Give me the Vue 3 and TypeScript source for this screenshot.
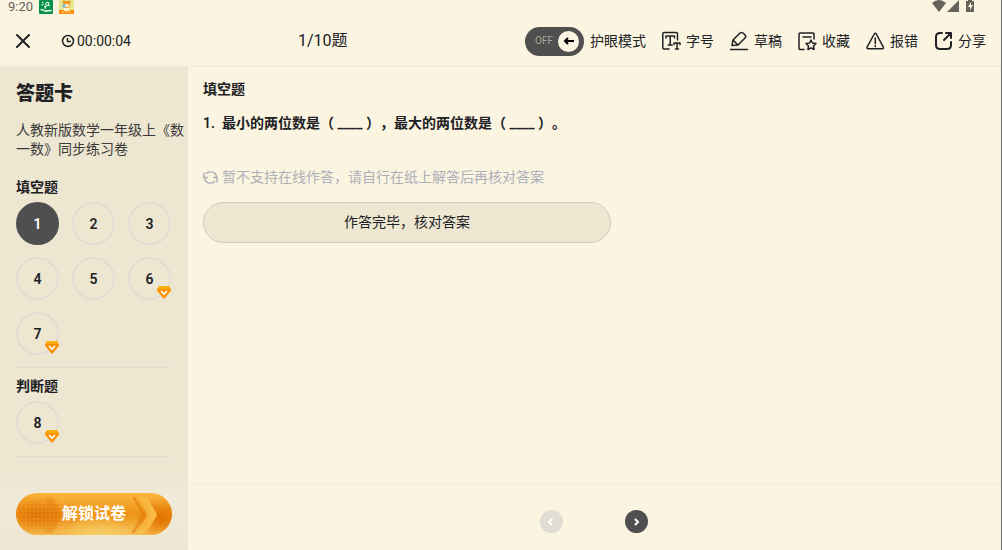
<script setup lang="ts">
import { ref } from 'vue'

interface Question {
  id: number
  vip: boolean
}
interface Section {
  title: string
  questions: Question[]
}

const sections: Section[] = [
  {
    title: '填空题',
    questions: [1, 2, 3, 4, 5, 6, 7].map((id) => ({ id, vip: id > 5 })),
  },
  { title: '判断题', questions: [{ id: 8, vip: true }] },
]
const tools = [
  { name: 'font', label: '字号' },
  { name: 'draft', label: '草稿' },
  { name: 'collect', label: '收藏' },
  { name: 'report', label: '报错' },
  { name: 'share', label: '分享' },
]

const current = ref(1)
const eyeCare = ref(false)
</script>

<template>
  <div class="app">
    <div class="status">
      <span class="clock">9:20</span>
      <svg class="app-icon" viewBox="0 0 14 14" aria-hidden="true">
        <rect width="14" height="14" rx="1" fill="#07904a" />
        <path d="M3 2l1.500 1M2.500 5l2-.5M6 5l2-3 2 1-1 2M5 7l4-2 2 1M7 6l-1 3" fill="none" stroke="#fff" stroke-width="1" />
        <path d="M1.500 10c2-1.500 3 1.500 5.500 1s4-.5 5.500-.5" fill="none" stroke="#fff" stroke-width="1.300" />
      </svg>
      <svg class="app-icon second" viewBox="0 0 15 14" aria-hidden="true">
        <rect width="15" height="14" fill="#e3e88f" />
        <path d="M0 10h15v4H0z" fill="#ff8a12" />
        <circle cx="5" cy="2" r="1.500" fill="#e9891d" />
        <circle cx="10" cy="2" r="1.500" fill="#e9891d" />
        <circle cx="7.500" cy="4.500" r="3.600" fill="#f29a26" />
        <ellipse cx="8" cy="5.500" rx="2.200" ry="1.600" fill="#fff3cf" />
        <circle cx="5" cy="6" r="2" fill="#8cc9cf" />
        <path d="M5 8h5v3H5z" fill="#fff0c6" />
        <path d="M3 12h2m1 0h2m1 0h3" stroke="#ffd77c" stroke-width="1" />
      </svg>
      <svg class="signals" viewBox="0 0 44 14" aria-hidden="true">
        <path d="M0 3Q7-3 14 3L7 12z" fill="#66635b" />
        <path d="M27 0v12H15z" fill="#66635b" />
        <path d="M36 0h4v1h2v11h-8V1h2z" fill="#66635b" />
        <path d="M39 2l-3 5h2v3l3-5h-2z" fill="#faf4e1" />
      </svg>
    </div>

    <header class="toolbar">
      <button class="close" aria-label="关闭">
        <svg viewBox="0 0 16 16"><path d="M2 2l12 12M14 2L2 14" /></svg>
      </button>
      <div class="timer">
        <svg viewBox="0 0 14 14" aria-hidden="true">
          <circle cx="7" cy="7" r="5.500" />
          <path d="M6.500 4v3.500H10" />
        </svg>
        <span>00:00:04</span>
      </div>
      <div class="progress">1/10题</div>
      <div class="tools">
        <label class="eye">
          <span class="switch" :class="{ on: eyeCare }">
            <input v-model="eyeCare" type="checkbox" />
            <span class="state">{{ eyeCare ? 'ON' : 'OFF' }}</span>
            <span class="knob">
              <svg viewBox="0 0 12 12" aria-hidden="true"><path d="M11 6H2M5 3L2 6l3 3" /></svg>
            </span>
          </span>
          <span>护眼模式</span>
        </label>
        <button v-for="tool in tools" :key="tool.name" class="tool">
          <svg viewBox="0 0 20 20" aria-hidden="true">
            <template v-if="tool.name === 'font'">
              <path d="M15.500 9V3q0-1.500-1.500-1.500H2Q.8 1.500.8 3v13.500q0 1.500 1.200 1.500h5" />
              <path d="M4 7V5h8.500v2M8.200 5v9M6.200 14h4" />
              <path d="M12 13.500V12h6v1.500M15 12v6M13.500 18h3" />
            </template>
            <template v-else-if="tool.name === 'draft'">
              <path d="M.5 18.500h17" />
              <path d="M2 14.500L3 9l7-7q1.500-1 3 0l2 2q1.500 1.500 0 3l-7 7zM3 9l5 5" />
            </template>
            <template v-else-if="tool.name === 'collect'">
              <path d="M6 18.500H2q-1 0-1-1V3q0-1 1-1h13q1 0 1 1v5M5 6h8" />
              <path d="M13 9l1.400 3 3.600.5-2.500 2.500.6 3.500-3.100-1.700-3.100 1.700.6-3.500L8 12.500l3.600-.5z" />
            </template>
            <template v-else-if="tool.name === 'report'">
              <path d="M8.300 3L1.200 15.800q-.8 1.900 1 1.900h14q1.800 0 1-1.900L10.300 3q-1-1.500-2 0z" />
              <path d="M9.300 7v5.500M9.300 14.500v1" />
            </template>
            <g v-else class="bold">
              <path d="M8 2H6Q2 2 2 6v8q0 4 4 4h7q4 0 4-4v-3" />
              <path d="M12 2h5v5M16.500 2.500L10 9" />
            </g>
          </svg>
          <span>{{ tool.label }}</span>
        </button>
      </div>
    </header>

    <div class="body">
      <aside class="sidebar">
        <h1>答题卡</h1>
        <p class="paper">人教新版数学一年级上《数一数》同步练习卷</p>
        <section v-for="section in sections" :key="section.title" class="group">
          <h2>{{ section.title }}</h2>
          <div class="numbers">
            <button
              v-for="q in section.questions"
              :key="q.id"
              class="number"
              :class="{ active: q.id === current }"
              @click="current = q.id"
            >
              {{ q.id }}
              <svg v-if="q.vip" class="gem" viewBox="0 0 14 13" aria-hidden="true">
                <path d="M3 0h8q1 0 1.500.8L14 3.500q.3.800-.3 1.500L8 12q-1 1-2 0L.3 5Q-.3 4.300 0 3.500L1.500.8Q2 0 3 0z" fill="#fa9200" />
                <path d="M3 0h8q1 0 1.500.8L13.500 3H.5l1-2.200Q2 0 3 0z" fill="#fdae0c" />
                <path d="M4 5l3 3 3-3" fill="none" stroke="#fff" stroke-width="1.700" />
              </svg>
            </button>
          </div>
        </section>
        <div class="unlock-wrap">
          <button class="unlock">
            <svg viewBox="0 0 157 42" preserveAspectRatio="none" aria-hidden="true">
              <defs>
                <linearGradient id="base" x1="0" y1="0" x2="0" y2="1">
                  <stop offset="0" stop-color="#fbb53b" />
                  <stop offset=".5" stop-color="#ee9518" />
                  <stop offset="1" stop-color="#f3b747" />
                </linearGradient>
                <radialGradient id="glow">
                  <stop offset="0" stop-color="#e17200" />
                  <stop offset="1" stop-color="#e17200" stop-opacity="0" />
                </radialGradient>
                <radialGradient id="light">
                  <stop offset="0" stop-color="#f7d36f" stop-opacity=".9" />
                  <stop offset="1" stop-color="#f7d36f" stop-opacity="0" />
                </radialGradient>
                <linearGradient id="arrow" x1="0" x2="1">
                  <stop offset="0" stop-color="#f9bd42" stop-opacity=".5" />
                  <stop offset="1" stop-color="#fbc450" />
                </linearGradient>
                <pattern id="dots" width="4" height="4" patternUnits="userSpaceOnUse">
                  <circle cx="2" cy="2" r="1" fill="#ffc66a" opacity=".28" />
                </pattern>
              </defs>
              <rect width="157" height="42" fill="url(#base)" />
              <ellipse cx="22" cy="22" rx="46" ry="19" fill="url(#glow)" />
              <ellipse cx="146" cy="25" rx="26" ry="20" fill="url(#glow)" />
              <ellipse cx="85" cy="42" rx="50" ry="18" fill="url(#light)" />
              <rect y="10" width="48" height="32" fill="url(#dots)" />
              <path d="M29 4h8l8 18-9 18h-8l9-18z" fill="#e17f10" opacity=".3" />
              <path d="M39 4h9l8 18-9 18h-9l9-18z" fill="#ffc456" opacity=".2" />
              <path d="M117 4h3l10 18-11 18h-3l11-18z" fill="#e07c0e" opacity=".6" />
              <path d="M123 4h9l10 18-11 18h-9l10-18z" fill="url(#arrow)" />
            </svg>
            <span>解锁试卷</span>
          </button>
        </div>
      </aside>

      <main class="main">
        <article class="question">
          <h2>填空题</h2>
          <p class="stem"><span class="index">1.</span>最小的两位数是（ <span class="blank">____</span> ），最大的两位数是（ <span class="blank">____</span> ）。</p>
          <p class="hint">
            <svg viewBox="0 0 16 16" aria-hidden="true">
              <path d="M1 3v5h4M3 4q2-2 5-2 6 0 6.500 6M15 13V8h-4M13 12q-2 2-5 2-6 0-6.500-6" />
            </svg>
            <span>暂不支持在线作答，请自行在纸上解答后再核对答案</span>
          </p>
          <button class="answer">作答完毕，核对答案</button>
        </article>
        <nav class="pager">
          <button class="prev" disabled aria-label="上一题">
            <svg viewBox="0 0 12 12"><path d="M7 3L4 6l3 3" /></svg>
          </button>
          <button aria-label="下一题">
            <svg viewBox="0 0 12 12"><path d="M5 3l3 3-3 3" /></svg>
          </button>
        </nav>
      </main>
    </div>
  </div>
</template>

<style>
body {
  margin: 0;
  background: #faf4e1;
}
</style>

<style scoped>
* {
  box-sizing: border-box;
}
.app {
  min-height: 100vh;
  display: flex;
  flex-direction: column;
  background: #faf4e1;
  border-right: 1px solid #667074;
  color: #202124;
  font-family: Roboto, "Noto Sans CJK SC", sans-serif;
  font-size: 14px;
  line-height: 20px;
  text-spacing-trim: space-all;
}
button {
  display: flex;
  align-items: center;
  justify-content: center;
  padding: 0;
  border: 0;
  background: none;
  color: inherit;
  font: inherit;
  cursor: pointer;
}
svg {
  display: block;
  flex: none;
}
h1,
h2,
p {
  margin: 0;
}
.status {
  display: flex;
  align-items: center;
  height: 14px;
  padding: 0 25px 0 8px;
}
.clock {
  color: #66635b;
  font-size: 13px;
  line-height: 14px;
}
.app-icon {
  width: 14px;
  height: 14px;
  margin-left: 6px;
}
.app-icon.second {
  width: 15px;
}
.signals {
  width: 44px;
  height: 14px;
  margin-left: auto;
}
.toolbar {
  display: flex;
  align-items: center;
  height: 53px;
  padding: 3px 15px 0;
  border-bottom: 2px solid #f1eee0;
}
.close svg {
  width: 16px;
  height: 16px;
  fill: none;
  stroke: #202124;
  stroke-width: 2;
  stroke-linecap: round;
}
.timer {
  display: flex;
  align-items: center;
  gap: 2px;
  margin-left: 30px;
}
.timer svg {
  width: 14px;
  height: 14px;
  fill: none;
  stroke: #202124;
  stroke-width: 1.5;
}
.progress {
  margin-left: 167px;
  font-size: 16px;
}
.tools {
  display: flex;
  gap: 16px;
  margin-left: auto;
}
.eye,
.tool {
  display: flex;
  align-items: center;
}
.eye {
  gap: 6px;
}
.tool {
  gap: 4px;
}
.tool svg {
  width: 20px;
  height: 20px;
  fill: none;
  stroke: #202124;
  stroke-width: 1.5;
  stroke-linejoin: round;
  stroke-linecap: round;
}
.tool .bold {
  stroke-width: 2;
}
.switch {
  position: relative;
  display: flex;
  align-items: center;
  justify-content: space-between;
  width: 59px;
  height: 29px;
  padding: 0 5px 0 10px;
  border-radius: 15px;
  background: #4f4f4f;
}
.switch.on {
  background: #8c7650;
}
.switch input {
  position: absolute;
  inset: 0;
  width: 100%;
  height: 100%;
  margin: 0;
  opacity: 0;
  cursor: pointer;
}
.state {
  color: #aaa79d;
  font-size: 10px;
}
.knob {
  display: grid;
  place-items: center;
  width: 21px;
  height: 21px;
  border-radius: 50%;
  background: #faf4e1;
}
.knob svg {
  width: 12px;
  height: 12px;
  fill: none;
  stroke: #000;
  stroke-width: 2;
}
.body {
  flex: 1;
  display: flex;
}
.sidebar {
  display: flex;
  flex-direction: column;
  flex: none;
  width: 188px;
  padding-top: 14px;
  background: #ede6d1;
}
.sidebar h1 {
  padding: 0 16px;
  font-size: 19px;
  font-weight: 900;
  line-height: 26px;
}
.paper {
  margin: 14px 0 18px;
  padding-left: 16px;
  color: #3b3b3a;
  line-height: 19px;
}
h2 {
  font-size: 14px;
  font-weight: 700;
  line-height: 20px;
}
.group {
  margin: 0 16px 8px;
  padding-bottom: 12px;
  border-bottom: 1px solid #e0dcd2;
}
.numbers {
  display: grid;
  grid-template-columns: repeat(3, 43px);
  gap: 12px 13px;
  margin-top: 5px;
}
.number {
  position: relative;
  height: 43px;
  border: 2px solid #e2ddd2;
  border-radius: 50%;
  font-weight: 600;
}
.number.active {
  border-color: #4f4f4f;
  background: #4f4f4f;
  color: #fff;
}
.gem {
  position: absolute;
  right: -2px;
  bottom: -1px;
  width: 14px;
  height: 13px;
}
.unlock-wrap {
  margin-top: auto;
  padding: 18px 16px 15px;
  background: linear-gradient(#ede6d1, #f1ead9 35%, #ede6d1);
}
.unlock {
  position: relative;
  width: 100%;
  height: 42px;
  overflow: hidden;
  border-radius: 21px;
  color: #fff;
  font-size: 16px;
  font-weight: 700;
}
.unlock svg {
  position: absolute;
  inset: 0;
  width: 100%;
  height: 100%;
}
.unlock span {
  position: relative;
}
.main {
  flex: 1;
  display: flex;
  flex-direction: column;
}
.question {
  flex: 1;
  padding: 12px 15px;
}
.stem {
  margin-top: 14px;
  font-weight: 600;
}
.index {
  display: inline-block;
  width: 19px;
}
.hint {
  display: flex;
  align-items: center;
  gap: 4px;
  margin: 34px 0 15px;
  color: #adb0b8;
}
.hint svg {
  width: 15px;
  height: 15px;
  fill: none;
  stroke: #a8abb3;
  stroke-width: 1.5;
}
.answer {
  width: 100%;
  max-width: 408px;
  height: 41px;
  padding-bottom: 2px;
  border: 1px solid #d2cbb9;
  border-radius: 21px;
  background: #ede6d1;
}
.pager {
  display: flex;
  justify-content: center;
  gap: 62px;
  padding: 26px 2px 17px 0;
  border-top: 1px solid #ebeadd;
}
.pager button {
  width: 23px;
  height: 23px;
  border-radius: 50%;
  background: #4f4f4f;
}
.pager .prev {
  background: #e0ddd2;
}
.pager svg {
  width: 12px;
  height: 12px;
  fill: none;
  stroke: #fff;
  stroke-width: 2;
}
</style>
